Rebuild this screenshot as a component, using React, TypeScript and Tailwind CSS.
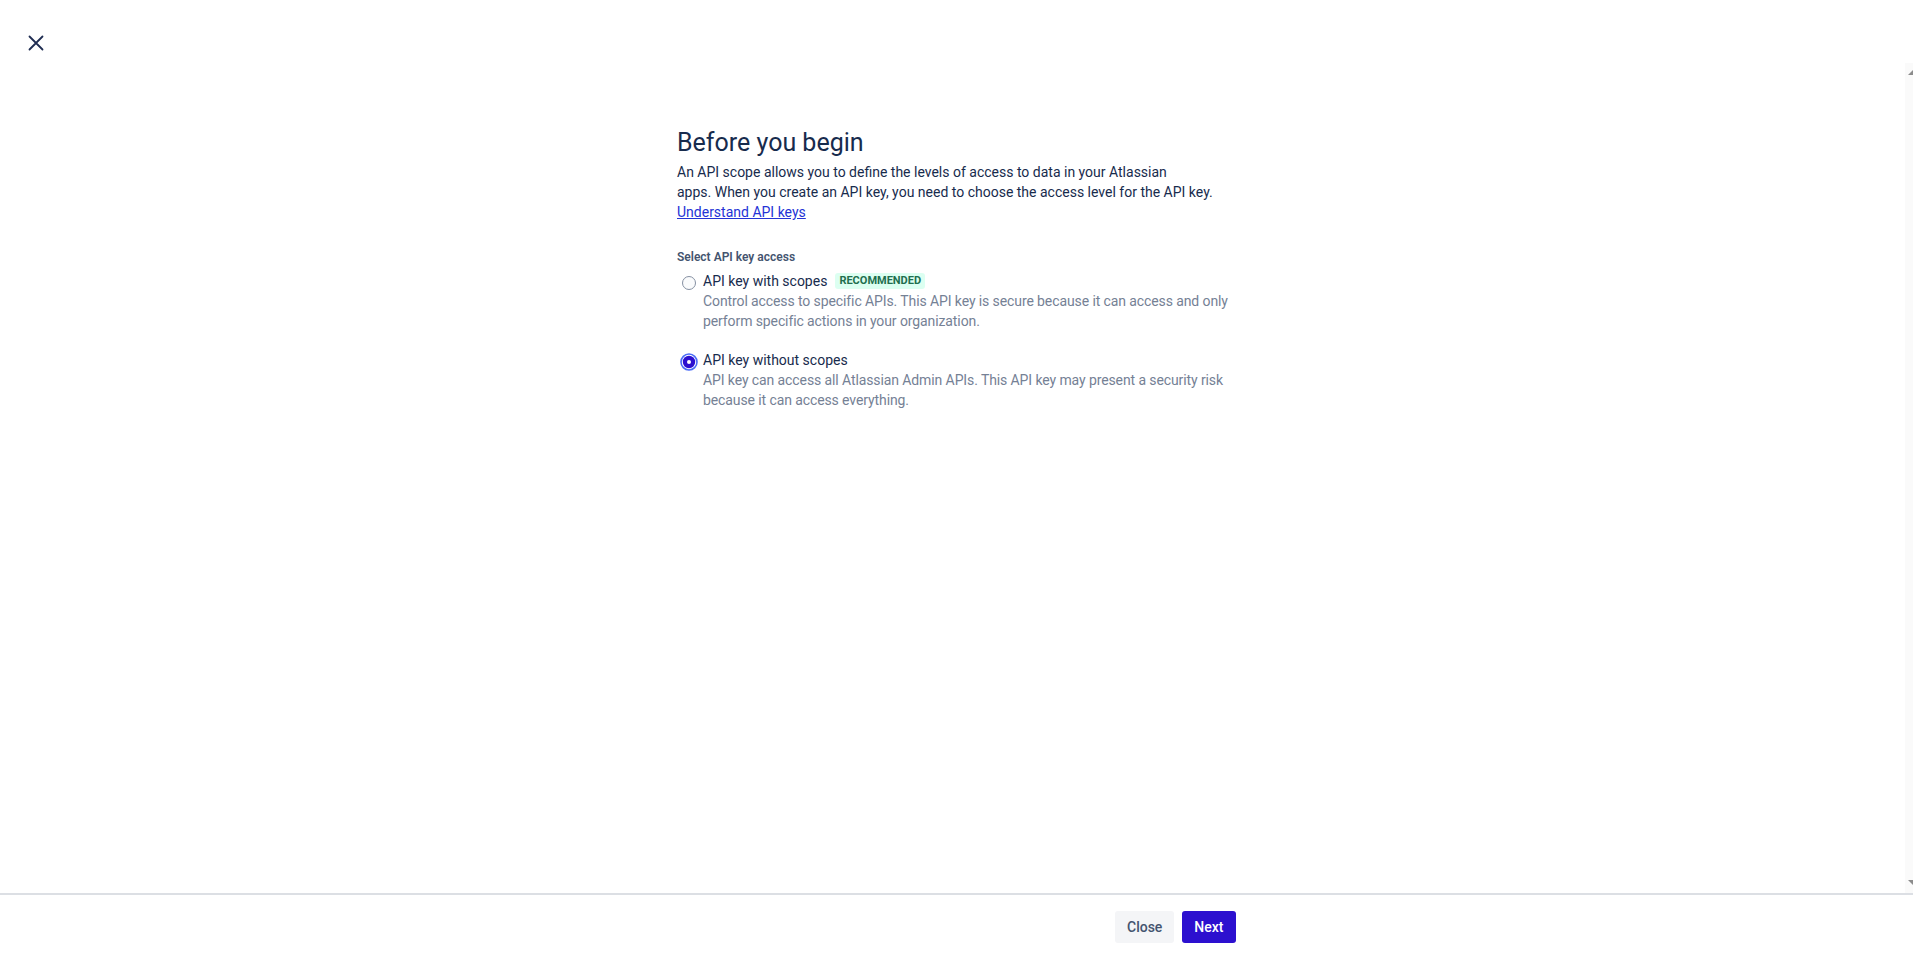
import React, { useState } from "react";

const font = "font-['Roboto','Noto_Sans',sans-serif]";

type Option = {
  id: string;
  title: string;
  badge?: string;
  lines: string[];
};

const options: Option[] = [
  {
    id: "scoped",
    title: "API key with scopes",
    badge: "RECOMMENDED",
    lines: [
      "Control access to specific APIs. This API key is secure because it can access and only",
      "perform specific actions in your organization.",
    ],
  },
  {
    id: "unscoped",
    title: "API key without scopes",
    lines: [
      "API key can access all Atlassian Admin APIs. This API key may present a security risk",
      "because it can access everything.",
    ],
  },
];

function Radio({ checked }: { checked: boolean }) {
  if (checked) {
    return (
      <svg width="18" height="18" viewBox="0 0 18 18">
        <circle cx="9" cy="9" r="8" fill="none" stroke="#4a6cf7" strokeWidth="1.6" />
        <circle cx="9" cy="9" r="6.2" fill="#2c10cf" />
        <circle cx="9" cy="9" r="2" fill="#ffffff" />
      </svg>
    );
  }
  return (
    <svg width="18" height="18" viewBox="0 0 18 18">
      <circle cx="9" cy="9" r="6.5" fill="#fafbfc" stroke="#8590a2" strokeWidth="1" />
    </svg>
  );
}

export default function App() {
  const [selected, setSelected] = useState("unscoped");

  return (
    <div className={`flex h-screen w-full flex-col bg-white text-[#172b4d] ${font}`}>
      <div className="h-[63px] shrink-0 pl-[28px] pt-[35px]">
        <button type="button" aria-label="Close" className="block h-4 w-4">
          <svg width="16" height="16" viewBox="0 0 16 16">
            <path d="M1.5 1.5 L14.5 14.5 M14.5 1.5 L1.5 14.5" stroke="#1f2d52" strokeWidth="1.8" strokeLinecap="round" />
          </svg>
        </button>
      </div>

      <div className="flex min-h-0 flex-1">
        <div className="min-w-0 flex-1 overflow-y-auto">
          <div className="mx-auto w-[551px] pt-[66px]">
            <h1 className="text-[25px] leading-[28px] font-normal">Before you begin</h1>
            <p className="mt-[5px] text-[14px] leading-[20px] whitespace-nowrap">
              An API scope allows you to define the levels of access to data in your Atlassian
              <br />
              apps. When you create an API key, you need to choose the access level for the API key.
              <br />
              <a href="#" className="text-[#2433d6] underline">
                Understand API keys
              </a>
            </p>

            <fieldset className="mt-[27px]">
              <legend className="text-[12px] leading-[16px] font-semibold text-[#44546f]">
                Select API key access
              </legend>
              <div className="mt-[6px] flex flex-col gap-[19px]">
                {options.map((o) => (
                  <label key={o.id} className="flex cursor-pointer items-start" onClick={() => setSelected(o.id)}>
                    <span className="flex h-[24px] w-[24px] shrink-0 items-center justify-center">
                      <Radio checked={selected === o.id} />
                    </span>
                    <span className="ml-[2px] flex flex-col whitespace-nowrap">
                      <span className="flex h-[20px] items-center gap-[8px] text-[14px] leading-[20px]">
                        {o.title}
                        {o.badge && (
                          <span className="inline-flex h-[16px] items-center rounded-[3px] bg-[#dcfff1] px-[4px] text-[11px] leading-[16px] font-bold text-[#216e4e]">
                            {o.badge}
                          </span>
                        )}
                      </span>
                      {o.lines.map((l) => (
                        <span key={l} className="text-[14px] leading-[20px] tracking-[-0.1px] text-[#758195]">
                          {l}
                        </span>
                      ))}
                    </span>
                  </label>
                ))}
              </div>
            </fieldset>
          </div>
        </div>

        {/* thin scrollbar track */}
        <div className="flex w-[8px] shrink-0 flex-col justify-between bg-[#fafafa] pt-[7px] pb-[8px]">
          <svg width="8" height="5" viewBox="0 0 8 5">
            <path d="M8 0 L8 5 L3 5 Z" fill="#8c8c8c" />
          </svg>
          <svg width="8" height="5" viewBox="0 0 8 5">
            <path d="M3 0 L8 0 L8 5 Z" fill="#8c8c8c" />
          </svg>
        </div>
      </div>

      <div className="h-[66px] shrink-0 border-t-2 border-[#dcdfe4]">
        <div className="mx-auto flex h-full w-[558px] items-center justify-end gap-[8px]">
          <button type="button" className="h-[32px] rounded-[3px] bg-[#f4f5f7] px-[12px] text-[14px] font-medium text-[#44546f]">
            Close
          </button>
          <button type="button" className="h-[32px] rounded-[3px] bg-[#2c10cf] px-[12px] text-[14px] font-medium text-white">
            Next
          </button>
        </div>
      </div>
    </div>
  );
}
